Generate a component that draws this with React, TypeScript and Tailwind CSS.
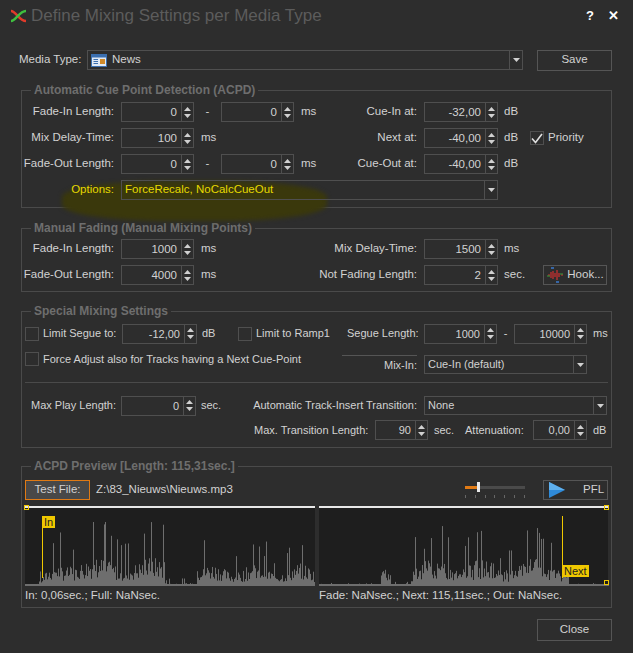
import React from "react";

const F = { fontFamily: '"Liberation Sans", Arial, sans-serif' };

function Arrows() {
  return (
    <div className="w-[12px] shrink-0 border-l border-[#4f4f4f] flex flex-col items-center justify-center gap-[3px]">
      <svg width="7" height="4"><path d="M0 4L3.5 0L7 4Z" fill="#d0d0d0" /></svg>
      <svg width="7" height="4"><path d="M0 0L3.5 4L7 0Z" fill="#d0d0d0" /></svg>
    </div>
  );
}

function Spin({ w, v }: { w: string; v: string }) {
  return (
    <div className={`flex h-[20px] shrink-0 border border-[#4f4f4f] ${w}`}>
      <div className="flex-1 text-right pr-[4px] leading-[18px]">{v}</div>
      <Arrows />
    </div>
  );
}

function Combo({ w, v, cls = "", h = "h-[20px]" }: { w: string; v: React.ReactNode; cls?: string; h?: string }) {
  return (
    <div className={`flex shrink-0 border border-[#4f4f4f] ${h} ${w} ${cls}`}>
      <div className="flex-1 pl-[3px] flex items-center gap-[5px]">{v}</div>
      <div className="w-[13px] border-l border-[#4f4f4f] flex items-center justify-center">
        <svg width="7" height="4"><path d="M0 0L3.5 4L7 0Z" fill="#d0d0d0" /></svg>
      </div>
    </div>
  );
}

function Check({ on = false }: { on?: boolean }) {
  return (
    <div className="w-[14px] h-[14px] shrink-0 border border-[#4f4f4f] flex items-center justify-center">
      {on && (
        <svg width="12" height="11" viewBox="0 0 12 11">
          <path d="M1 5.5L4.5 9.5L11 1" stroke="#e0e0e0" strokeWidth="1.6" fill="none" />
        </svg>
      )}
    </div>
  );
}

function Legend({ t }: { t: string }) {
  return (
    <legend className="ml-[9px] px-[3px] text-[12px] leading-[14px] font-bold text-[#6e6e6e]">{t}</legend>
  );
}

function rand(seed: number) {
  let s = seed;
  return () => {
    s = (s * 9301 + 49297) % 233280;
    return s / 233280;
  };
}

function wavePath(seed: number, env: (x: number) => number, W: number, H: number) {
  const r = rand(seed);
  let d = "";
  for (let x = 0; x < W; x += 1) {
    const e = env(x);
    let h = e * (0.15 + r() * 0.45);
    if (r() > 0.88) h = e * (0.9 + r() * 0.7);
    h = Math.min(h, H - 14);
    if (h < 1) h = 1;
    d += `M${x + 0.5} ${H}V${H - h}`;
  }
  return d;
}

const envL = (x: number) => {
  if (x < 14) return 2;
  if (x < 30) return 10 + (x - 14) * 2;
  if (x < 140) return 40 + Math.sin(x / 9) * 8;
  if (x < 172) return 5;
  if (x < 290) return 30 + Math.sin(x / 7) * 8;
  return 4;
};
const envR = (x: number) => {
  if (x < 62) return 2;
  if (x < 72) return 34;
  if (x < 92) return 3;
  if (x < 250) return 36 + Math.sin(x / 8) * 10;
  return 2;
};

export default function App() {
  return (
    <div style={F} className="w-[633px] h-[653px] bg-[#2d2d2d] text-[#d2d2d2] text-[11.5px] whitespace-nowrap overflow-hidden">
      {/* title bar */}
      <div className="h-[32px] flex items-center pl-[10px] pr-[14px]">
        <svg width="17" height="14" viewBox="0 0 17 14">
          <path d="M1 2C6 2 9 12 16 12" stroke="#e03a2a" strokeWidth="2.4" fill="none" />
          <path d="M1 12C6 12 9 2 16 2" stroke="#3fbf3f" strokeWidth="2.4" fill="none" />
        </svg>
        <div className="ml-[4px] text-[17px] text-[#5c5c5c]">Define Mixing Settings per Media Type</div>
        <div className="flex-1" />
        <div className="text-[13px] font-bold text-white">?</div>
        <div className="ml-[14px] text-[13px] font-bold text-white">✕</div>
      </div>

      <div className="px-[21px]">
        {/* media type */}
        <div className="mt-[18px] h-[20px] flex items-center">
          <div className="w-[68px] -ml-[2px]">Media Type:</div>
          <Combo
            w="w-[436px]"
            v={
              <>
                <svg width="16" height="13" viewBox="0 0 16 13">
                  <rect x="0.5" y="0.5" width="15" height="12" fill="#dfe9f5" stroke="#3b6fb0" />
                  <rect x="1" y="1" width="14" height="2.5" fill="#3b6fb0" />
                  <path d="M2.5 5.5H7M2.5 7.5H7M2.5 9.5H7" stroke="#3b6fb0" />
                  <rect x="9" y="5" width="5" height="5" fill="#d08a2a" />
                </svg>
                <span>News</span>
              </>
            }
          />
          <div className="ml-[14px] w-[75px] h-[21px] border border-[#555] flex items-center justify-center">Save</div>
        </div>

        {/* ACPD */}
        <fieldset className="mt-[13px] border border-[#4a4a4a] pt-[2px] pb-[4px] relative">
          <Legend t="Automatic Cue Point Detection (ACPD)" />
          <div className="absolute left-[40px] top-[84px] w-[265px] h-[40px] rounded-[40%] bg-[#3a380c] blur-[2px]" />
          <div className="relative">
            <div className="h-[26px] flex items-center">
              <div className="w-[92px] text-right">Fade-In Length:</div>
              <Spin w="w-[73px] ml-[7px]" v="0" />
              <div className="w-[27px] text-center">-</div>
              <Spin w="w-[73px]" v="0" />
              <div className="w-[123px] flex justify-between pl-[7px]"><span>ms</span><span>Cue-In at:</span></div>
              <Spin w="w-[74px] ml-[7px]" v="-32,00" />
              <div className="ml-[6px]">dB</div>
            </div>
            <div className="h-[26px] flex items-center">
              <div className="w-[92px] text-right">Mix Delay-Time:</div>
              <Spin w="w-[73px] ml-[7px]" v="100" />
              <div className="w-[223px] flex justify-between pl-[7px]"><span>ms</span><span>Next at:</span></div>
              <Spin w="w-[74px] ml-[7px]" v="-40,00" />
              <div className="ml-[6px] w-[26px]">dB</div>
              <Check on />
              <div className="ml-[4px]">Priority</div>
            </div>
            <div className="h-[26px] flex items-center">
              <div className="w-[92px] text-right">Fade-Out Length:</div>
              <Spin w="w-[73px] ml-[7px]" v="0" />
              <div className="w-[27px] text-center">-</div>
              <Spin w="w-[73px]" v="0" />
              <div className="w-[123px] flex justify-between pl-[7px]"><span>ms</span><span>Cue-Out at:</span></div>
              <Spin w="w-[74px] ml-[7px]" v="-40,00" />
              <div className="ml-[6px]">dB</div>
            </div>
            <div className="h-[26px] flex items-center">
              <div className="w-[92px] text-right text-[#e6d800]">Options:</div>
              <Combo w="w-[377px] ml-[7px]" v={<span className="text-[#e6d800]">ForceRecalc, NoCalcCueOut</span>} />
            </div>
          </div>
        </fieldset>

        {/* Manual fading */}
        <fieldset className="mt-[13px] border border-[#4a4a4a] pt-[1px] pb-[3px]">
          <Legend t="Manual Fading (Manual Mixing Points)" />
          <div className="h-[26px] flex items-center">
            <div className="w-[92px] text-right">Fade-In Length:</div>
            <Spin w="w-[73px] ml-[7px]" v="1000" />
            <div className="w-[223px] flex justify-between pl-[7px]"><span>ms</span><span>Mix Delay-Time:</span></div>
            <Spin w="w-[74px] ml-[7px]" v="1500" />
            <div className="ml-[6px]">ms</div>
          </div>
          <div className="h-[26px] flex items-center">
            <div className="w-[92px] text-right">Fade-Out Length:</div>
            <Spin w="w-[73px] ml-[7px]" v="4000" />
            <div className="w-[223px] flex justify-between pl-[7px]"><span>ms</span><span>Not Fading Length:</span></div>
            <Spin w="w-[74px] ml-[7px]" v="2" />
            <div className="ml-[6px] w-[39px]">sec.</div>
            <div className="w-[64px] h-[20px] border border-[#555] flex items-center justify-center gap-[3px]">
              <svg width="18" height="16" viewBox="0 0 18 16">
                <path d="M2 8h2M5 5v6M7 4v8M9 6v4M11 3v10M13 6v4M15 8h2" stroke="#d03030" strokeWidth="1.2" />
                <path d="M1 9h3M14 7h3" stroke="#3aa03a" strokeWidth="1.2" />
                <path d="M5 1h3M10 15h3" stroke="#3a7ad0" strokeWidth="1.5" />
              </svg>
              <span>Hook...</span>
            </div>
          </div>
        </fieldset>

        {/* Special */}
        <fieldset className="mt-[12px] border border-[#4a4a4a] pt-[5px] pb-[7px] text-[11px]">
          <Legend t="Special Mixing Settings" />
          <div className="h-[21px] flex items-center">
            <div className="w-[100px] pl-[3px] flex items-center gap-[4px]"><Check /><span>Limit Segue to:</span></div>
            <Spin w="w-[75px]" v="-12,00" />
            <div className="w-[41px] pl-[5px]">dB</div>
            <div className="w-[109px] flex items-center gap-[4px]"><Check /><span>Limit to Ramp1</span></div>
            <div className="w-[70px] text-right">Segue Length:</div>
            <Spin w="w-[73px] ml-[7px]" v="1000" />
            <div className="w-[17px] text-center">-</div>
            <Spin w="w-[73px]" v="10000" />
            <div className="ml-[6px]">ms</div>
          </div>
          <div className="mt-[11px] h-[19px] flex items-start">
            <div className="w-[320px] pl-[3px] flex items-center gap-[4px] -mt-[4px]"><Check /><span>Force Adjust also for Tracks having a Next Cue-Point</span></div>
            <div className="w-[75px] h-[19px] border-t border-[#555] flex items-center justify-end">Mix-In:</div>
            <Combo w="w-[163px] ml-[7px]" h="h-[19px]" v="Cue-In (default)" />
          </div>
          <div className="mt-[8px] ml-[3px] mr-[3px] h-px bg-[#4a4a4a]" />
          <div className="mt-[13px] h-[19px] flex items-center">
            <div className="w-[99px] pl-[9px]">Max Play Length:</div>
            <Spin w="w-[75px]" v="0" />
            <div className="w-[221px] flex justify-between pl-[5px]"><span>sec.</span><span>Automatic Track-Insert Transition:</span></div>
            <Combo w="w-[183px] ml-[7px]" h="h-[19px]" v="None" />
          </div>
          <div className="mt-[5px] h-[20px] flex items-center">
            <div className="w-[232px]" />
            <div className="w-[121px]">Max. Transition Length:</div>
            <Spin w="w-[53px]" v="90" />
            <div className="w-[37px] pl-[6px]">sec.</div>
            <div className="w-[68px]">Attenuation:</div>
            <Spin w="w-[54px]" v="0,00" />
            <div className="ml-[6px]">dB</div>
          </div>
        </fieldset>

        {/* Preview */}
        <fieldset className="mt-[11px] border border-[#4a4a4a] pt-[7px] pb-[1px]">
          <Legend t="ACPD Preview [Length: 115,31sec.]" />
          <div className="h-[20px] flex items-center pl-[3px] pr-[3px]">
            <div className="w-[65px] h-[20px] bg-[#484848] border border-[#e07a14] flex items-center justify-center">Test File:</div>
            <div className="ml-[6px]">Z:\83_Nieuws\Nieuws.mp3</div>
            <div className="flex-1" />
            <div className="w-[60px] h-[20px] relative">
              <div className="absolute left-0 top-[6px] w-[60px] h-[3px] bg-[#4a4a4a]" />
              <div className="absolute left-0 top-[6px] w-[13px] h-[3px] bg-[#e07a14]" />
              <div className="absolute left-[12px] top-[2px] w-[3px] h-[10px] bg-[#e8e8e8]" />
              <div className="absolute left-0 top-[15px] w-[60px] flex justify-between">
                {[0, 1, 2, 3, 4, 5, 6].map((i) => <div key={i} className="w-px h-[3px] bg-[#666]" />)}
              </div>
            </div>
            <div className="ml-[18px] w-[65px] h-[20px] border border-[#555] flex items-center">
              <svg width="20" height="18" viewBox="0 0 20 18" className="ml-[3px]">
                <path d="M2 1L18 9L2 17Z" fill="#2f8ad8" />
                <path d="M2 1L18 9L2 9Z" fill="#5fb0ee" />
              </svg>
              <span className="ml-[16px]">PFL</span>
            </div>
          </div>
          <div className="mt-[6px] mx-[3px] h-[80px] flex bg-[#2d2d2d] relative">
            <div className="w-[290px] h-[80px] bg-[#1e1e1e] border-t-2 border-[#e8e8e8] relative">
              <svg width="290" height="78" className="absolute left-0 top-0">
                <path d={wavePath(7, envL, 290, 78)} stroke="#6e6e6e" strokeWidth="1" />
                <rect x="0" y="76" width="290" height="2" fill="#6e6e6e" />
              </svg>
              <div className="absolute left-[17px] top-[8px] w-px h-[62px] bg-[#f0c800]" />
              <div className="absolute left-[17px] top-[8px] h-[12px] px-[2px] bg-[#f0c800] text-[#1e1e1e] text-[11px] leading-[12px]">In</div>
              <div className="absolute -left-[1px] -top-[3px] w-[5px] h-[5px] border border-[#f0c800]" />
            </div>
            <div className="w-[4px]" />
            <div className="flex-1 h-[80px] bg-[#1e1e1e] border-t-2 border-[#e8e8e8] relative">
              <svg width="290" height="78" className="absolute left-0 top-0">
                <path d={wavePath(13, envR, 290, 78)} stroke="#6e6e6e" strokeWidth="1" />
                <rect x="0" y="76" width="290" height="2" fill="#6e6e6e" />
              </svg>
              <div className="absolute left-[243px] top-[8px] w-px h-[62px] bg-[#f0c800]" />
              <div className="absolute left-[243px] top-[57px] h-[12px] px-[2px] bg-[#f0c800] text-[#1e1e1e] text-[11px] leading-[12px]">Next</div>
              <div className="absolute -right-[1px] -top-[3px] w-[5px] h-[5px] border border-[#f0c800]" />
              <div className="absolute -right-[1px] bottom-[1px] w-[5px] h-[5px] border border-[#f0c800]" />
            </div>
          </div>
          <div className="h-[20px] flex items-center pl-[3px]">
            <div className="w-[294px]">In: 0,06sec.; Full: NaNsec.</div>
            <div>Fade: NaNsec.; Next: 115,11sec.; Out: NaNsec.</div>
          </div>
        </fieldset>

        <div className="mt-[11px] flex justify-end">
          <div className="w-[75px] h-[22px] border border-[#555] flex items-center justify-center">Close</div>
        </div>
      </div>
    </div>
  );
}
